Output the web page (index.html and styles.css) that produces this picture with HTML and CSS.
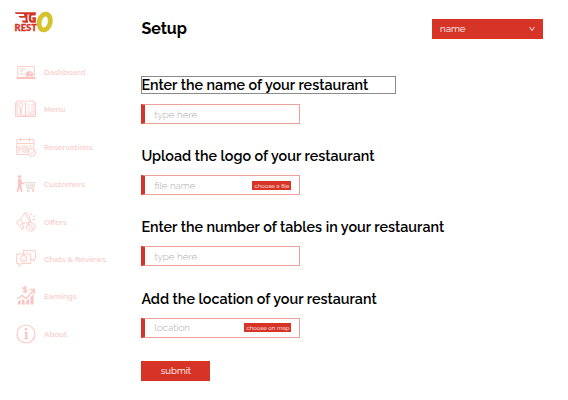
FILE: index.html
```html
<!DOCTYPE html>
<html lang="en">
<head>
<meta charset="utf-8">
<title>Setup</title>
<link rel="stylesheet" href="styles.css">
</head>
<body>
<div class="app">
  <aside class="sidebar">
    <div class="logo">
      <svg class="logo-mark" width="40" height="24" viewBox="0 0 40 24">
        <path d="M.8 2.200H21.800V4.400H11.500V5.500H10V3.900H2.500Q1 3.700 .8 2.200ZM4.500 6H13V7.800H6.500Q5 7.700 4.500 6ZM7.500 10.400H14V12.800H10Q8.200 12.400 7.500 10.400ZM10.500 4H13.500V12.800H11.500V7H10.500Z" fill="#d63427"/>
        <path d="M21.500 4.300H18Q16 4.300 16 6.500V9.300Q16 11.500 18 11.500H20.700V8.300H18.300" fill="none" stroke="#d63427" stroke-width="2.300"/>
        <text class="logo-text" x="0.500" y="21" textLength="22.500" lengthAdjust="spacingAndGlyphs">REST</text>
        <ellipse cx="30.700" cy="12" rx="5.500" ry="8" transform="rotate(12 30.700 12)" fill="none" stroke="#d6c32b" stroke-width="4.800"/>
      </svg>
    </div>
    <nav class="menu">
      <a class="item"><svg class="icon" viewBox="0 0 20 20"><path d="M1.700 14.500V4.500h16.600v10M4 7h6M4 9h3M4 12h5"/><path class="solid" d="M0 15h20l-1 2H1zM10 14.500a3.900 3.900 0 1 1 7 0z"/><path class="light" d="M13.500 12.500l1.800-2.500"/></svg><span>Dashboard</span></a>
      <a class="item"><svg class="icon wide" viewBox="0 0 21 20"><path d="M10.500 3.500Q9.500 2 8 2H2v14h6.500q2 0 2 2 0-2 2-2H19V2h-5.500q-2 0-3 1.500V18M2 4H.5v13.500H10M19 4h1.500v13.500H11M12.500 6h2M16 6h2M12.500 9h2M16 9h2M12.500 12h2M16 12h2M12.500 14h5"/><ellipse cx="5.800" cy="6.500" rx="1.800" ry="2.700"/><path class="thick" d="M5.800 9v6"/></svg><span>Menu</span></a>
      <a class="item"><svg class="icon" viewBox="0 0 20 20"><path d="M12 17.500H.8V2.500h17V12M1 6.500h17M4.500.5v4M13.500.5v4M2 9v3q2 1 2-1V8.500M3 12v4M14.500 8.500v3"/><circle cx="9" cy="12" r="3.300"/><circle cx="9" cy="12" r="1.500"/><circle cx="15.800" cy="15.500" r="3.800"/><path d="M14 15.500l1.500 1.500 3-3.500"/></svg><span>Reservations</span></a>
      <a class="item"><svg class="icon" viewBox="0 0 20 20"><circle class="solid" cx="3.500" cy="2.600" r="1.700"/><path class="solid" d="M2 4.800h3l1 3.500 2.500 1v1.200L5.500 10v3l1 5H5L3.500 13.500l-1.500 4.500H.5L2 12z"/><path class="cart" d="M8.500 8.200h1.500l1 6.500h7M10.500 8.500H19l-1 5h-7M12.500 8.500l.3 5M15 8.500v5M17 8.500l-.5 5M10.500 11.300h8"/><circle class="solid" cx="12" cy="16.700" r="1.100"/><circle class="solid" cx="17" cy="16.700" r="1.100"/></svg><span>Customers</span></a>
      <a class="item"><svg class="icon" viewBox="0 0 20 20"><path d="M1 9.500L4.500 7.500 8.500 1l6 9.500-7.500.8-3.500 2Q.2 12.500 1 9.500ZM4.500 7.500L7 11.300M4 13.500l2 4 2-1-1.500-5M8.500 1Q11-.5 13 4t1.500 6.500M15.500.8L15 3M17 5l2.500-1.500M16.500 7.500h3"/><circle cx="14.800" cy="14.800" r="4.300"/><path d="M13 17l3.500-4.500"/><circle cx="13" cy="13.300" r=".8"/><circle cx="16.500" cy="16.300" r=".8"/></svg><span>Offers</span></a>
      <a class="item"><svg class="icon" viewBox="0 0 20 20"><path d="M.7 5h14v9.500H5.500L3 17.500v-3H.7zM7.500 5V1.700h12V10h-1.500v2L15 10"/><circle cx="7.700" cy="9.700" r="3.300"/><path d="M6 10.500q1.700 1.800 3.400 0M6.300 8.500h.7M8.500 8.500h.7"/></svg><span>Chats &amp; Reviews</span></a>
      <a class="item"><svg class="icon" viewBox="0 0 20 20"><path class="solid" d="M2 15.500l2.700-2v5H2zM6 12.800l2.700 2v3.700H6zM10.200 15l2.800-2.500v6h-2.800zM14.500 11l3-3v10.500h-3z"/><path class="thick" d="M1 13l5-3.500 4 3 7.500-8M13.500 3.500h4.700V8"/><path class="thick" d="M10.800 2Q7.500.8 7.200 2.500 7.200 3.500 9 3.700q2 .4 1.800 1.500Q10.300 6.500 7 5.500M9-.2V7.300"/></svg><span>Earnings</span></a>
      <a class="item"><svg class="icon" viewBox="0 0 20 20"><circle class="ring" cx="10" cy="10" r="9"/><circle class="solid" cx="10" cy="5.300" r="1.300"/><path class="solid" d="M8.500 8h2.800v6H12v1.300H8.300V14h.9V9.300h-.7z"/></svg><span>About</span></a>
    </nav>
  </aside>
  <main class="content">
    <header class="topbar">
      <h1 class="title">Setup</h1>
      <button class="dropdown"><span>name</span><svg width="6" height="6" viewBox="0 0 6 6"><path d="M.6 1L3 4.600 5.400 1" fill="none" stroke="#fff" stroke-width=".9"/></svg></button>
    </header>
    <form class="form">
      <section class="field">
        <h2 class="label selected">Enter the name of your restaurant</h2>
        <div class="input"><span>type here</span></div>
      </section>
      <section class="field">
        <h2 class="label">Upload the logo of your restaurant</h2>
        <div class="input"><span>file name</span><span class="chip file">choose a file</span></div>
      </section>
      <section class="field">
        <h2 class="label">Enter the number of tables in your restaurant</h2>
        <div class="input"><span>type here</span></div>
      </section>
      <section class="field">
        <h2 class="label">Add the location of your restaurant</h2>
        <div class="input"><span>location</span><span class="chip map">choose on map</span></div>
      </section>
      <button class="submit" type="button">submit</button>
    </form>
  </main>
</div>
</body>
</html>
```
FILE: styles.css
```css
* { box-sizing: border-box; }
body { margin: 0; background: #fff; font-family: Raleway, Lato, sans-serif; }
.app { display: flex; width: 568px; height: 400px; overflow: hidden; }
.sidebar { width: 141px; flex: none; padding: 10px 0 0 14px; }
.logo { height: 43.300px; }
.logo-mark { display: block; }
.logo-text { font: 900 9px Lato, sans-serif; fill: #d63427; stroke: #d63427; stroke-width: .3; }
.menu { display: flex; flex-direction: column; }
.item { display: flex; align-items: center; height: 37.400px; padding-left: 2px; color: #fbcfcd; font-size: 8px; font-weight: 600; white-space: nowrap; }
.icon { width: 20px; height: 20px; margin-right: 8px; flex: none; fill: none; stroke: #fac8c5; stroke-width: .9; overflow: visible; }
.icon.wide { width: 21px; margin: 0 8px 0 -1px; }
.icon .solid { fill: #fbc4c2; stroke: none; }
.icon .light { stroke: #fff; }
.icon .cart { stroke: #eadbd9; }
.icon .thick { stroke-width: 1.500; }
.icon .ring { stroke-width: 1.200; }
.content { flex: 1; padding-left: .4px; }
.topbar { display: flex; justify-content: space-between; align-items: center; height: 20px; margin: 19px 25px 37px 0; }
.title { margin: 0; font-size: 16px; line-height: 20px; font-weight: 700; }
.dropdown { display: flex; justify-content: space-between; align-items: center; width: 111px; height: 20px; padding: 0 8px; border: 0; background: #d63427; color: #fff; font: 400 9.700px/20px Raleway, Lato, sans-serif; }
.field { height: 71.200px; }
.label { display: flex; align-items: center; width: max-content; height: 18px; margin: 0 0 10px; font-size: 14.320px; line-height: 18px; font-weight: 600; white-space: nowrap; color: #000; }
.label.selected { width: 255px; box-shadow: inset 0 0 0 1px #8b8b8b; }
.input { display: flex; align-items: center; justify-content: space-between; width: 159px; height: 20px; padding: 0 8px 0 9px; border: 1px solid #eda19b; border-left: 4px solid #d63427; color: #adadad; font-size: 9.800px; font-weight: 300; }
.chip { display: flex; align-items: center; justify-content: center; height: 9px; background: #d63427; color: #fff; font-size: 6px; font-weight: 400; line-height: 9px; white-space: nowrap; }
.chip.file { width: 39px; }
.chip.map { width: 47px; }
.submit { display: block; width: 69px; height: 20px; padding: 0; border: 0; background: #d63427; color: #fff; font: 400 9.600px/20px Raleway, Lato, sans-serif; }
```
